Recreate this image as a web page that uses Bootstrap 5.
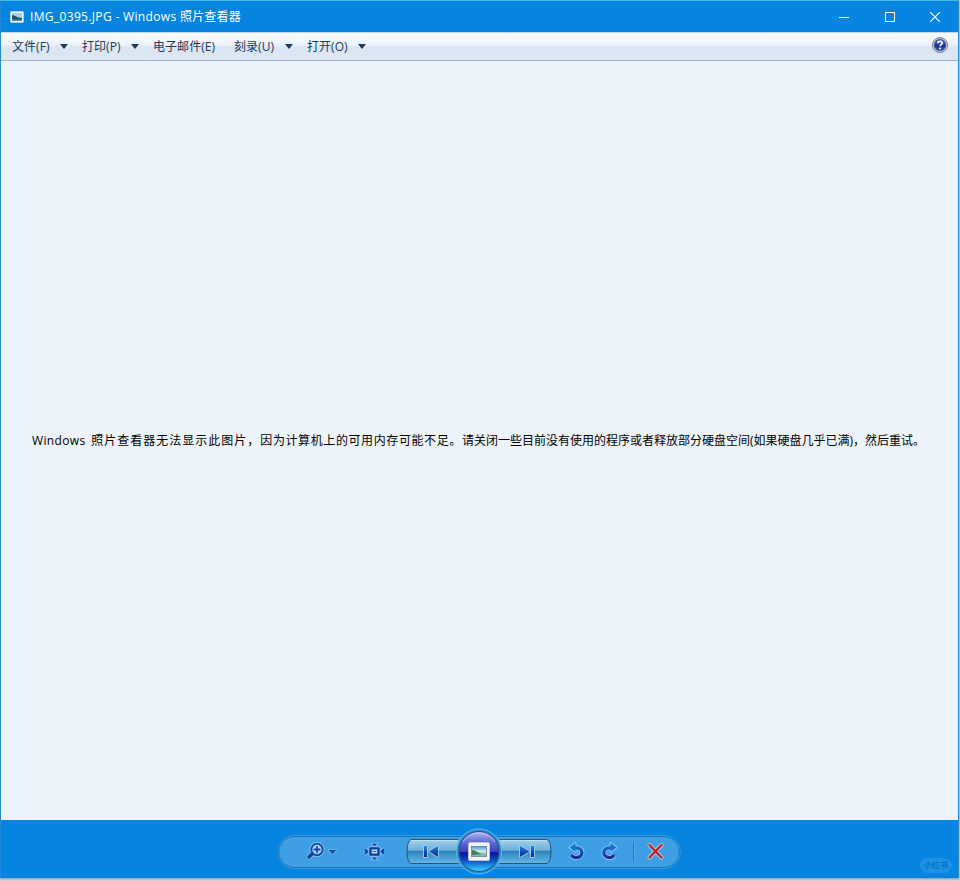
<!DOCTYPE html>
<html lang="zh-CN">
<head>
<meta charset="utf-8">
<meta name="viewport" content="width=device-width, initial-scale=1">
<title>IMG_0395.JPG - Windows 照片查看器</title>
<link href="https://cdn.jsdelivr.net/npm/bootstrap@5.3.0/dist/css/bootstrap.min.css" rel="stylesheet">
<style>
body{background:#d2d6da;font-family:"Open Sans","Noto Sans CJK SC",sans-serif;font-size:12px;line-height:18px;height:881px;overflow:hidden}
.window{width:959px;height:878px;background:#0585e0;border-top:1px solid #53b7ef;border-left:1px solid #2389d3;border-right:1px solid #2b8bd0;box-shadow:0 1px 2px #8c9299}
.titlebar{height:31px;color:#fff;padding-left:9px}
.title-text{margin-left:6px}
.title-latin{letter-spacing:.34px}
.title-cjk{letter-spacing:.2px}
.caption-btn{width:45.5px;height:30px;border:0;background:none;color:#fff}
.menubar{height:29px;background:linear-gradient(#f9fcff 0,#eaf2fa 45%,#dae6f3 52%,#dce7f4 100%);border-bottom:1px solid #9eb4ce;border-top:1px solid #bcd7ee;color:#1e395b;padding-left:11px}
.menu-item{display:flex;align-items:center;border:0;background:none;color:inherit;padding:0;white-space:nowrap;height:27px;letter-spacing:.05px}
.w-70{width:70px}.w-71{width:71px}.w-81{width:81px}.w-73{width:73px}
.arrow{width:0;height:0;border:4px solid transparent;border-top:5px solid #1e395b;border-bottom:0;margin:0 14px 1px auto}
.help{margin:0 10px 4px auto}
.viewer{height:759px;background:#edf3fa;color:#000;padding-left:31px;white-space:nowrap}
.controls{height:57px;padding-left:277px}
.controls svg,.titlebar svg,.menubar svg{display:block;flex:none}
.watermark{position:absolute;left:920px;top:858px;width:32px;height:15px;border-radius:8px;background:#1e91e3;color:#0873c5;font-size:8px;font-weight:bold;line-height:14px;text-align:center}
.s0{letter-spacing:.35px;margin-right:-1.8px}.s1{letter-spacing:1px}.s2{letter-spacing:.6px}
</style>
</head>
<body>
<main class="window d-flex flex-column">
  <header class="titlebar d-flex align-items-center">
    <svg width="14" height="12" viewBox="0 0 14 12"><rect x=".5" y=".5" width="13" height="11" rx="1" fill="#fafafa" stroke="#b4c8d6"/><path d="M2 2h10v8H2z" fill="#a4d4ea"/><path d="M2 4c3 0 5 3 10 3v2H2z" fill="#1f5664"/><path d="M2 8.5h10V10H2z" fill="#4e93b4"/></svg>
    <span class="title-text"><span class="title-latin">IMG_0395.JPG - Windows </span><span class="title-cjk">照片查看器</span></span>
    <div class="ms-auto d-flex">
      <button class="caption-btn p-0 d-flex align-items-center justify-content-center" aria-label="最小化"><svg width="10" height="10"><path d="M0 5.5h10" stroke="#fff"/></svg></button>
      <button class="caption-btn p-0 d-flex align-items-center justify-content-center" aria-label="最大化"><svg width="10" height="10"><path d="M.5.5h9v9h-9z" fill="none" stroke="#fff"/></svg></button>
      <button class="caption-btn p-0 d-flex align-items-center justify-content-center" aria-label="关闭"><svg width="10" height="10"><path d="M0 0l10 10M10 0L0 10" stroke="#fff" stroke-width="1.1"/></svg></button>
    </div>
  </header>
  <nav class="menubar d-flex align-items-center">
    <button class="menu-item w-70">文件(F)<i class="arrow"></i></button>
    <button class="menu-item w-71">打印(P)<i class="arrow"></i></button>
    <button class="menu-item w-81">电子邮件(E)</button>
    <button class="menu-item w-73">刻录(U)<i class="arrow"></i></button>
    <button class="menu-item w-73">打开(O)<i class="arrow"></i></button>
    <svg class="help" width="16" height="16" viewBox="0 0 16 16" role="img" aria-label="帮助"><defs><linearGradient id="hg" x2="0" y2="1"><stop stop-color="#5775c8"/><stop offset=".48" stop-color="#2643a0"/><stop offset=".55" stop-color="#172c88"/><stop offset="1" stop-color="#3d68cd"/></linearGradient></defs><circle cx="8" cy="8" r="7.5" fill="#d8dbe2" stroke="#77808e"/><circle cx="8" cy="8" r="5.9" fill="url(#hg)" stroke="#34488b" stroke-width=".6"/><path d="M5.9 6.3C6 3.7 10.2 3.7 10.2 6.2c0 1.5-2 1.5-2 3.1" fill="none" stroke="#fff" stroke-width="1.7"/><circle cx="8.1" cy="11.4" r="1" fill="#fff"/></svg>
  </nav>
  <section class="viewer d-flex align-items-center">
    <div><span class="s0">Windows&nbsp;</span><span class="s1"> 照片查看器无法显示此图片，</span><span class="s2">因为计算机上的可用内存可能不足。</span><span>请关闭一些目前没有使用的程序或者释放部分硬盘空间(如果硬盘几乎已满)，然后重试。</span></div>
  </section>
  <footer class="controls">
    <svg width="404" height="58" viewBox="278 820 404 58" role="img" aria-label="图片控制">
      <defs>
        <linearGradient id="btn" x2="0" y2="1"><stop stop-color="#a5d0ea"/><stop offset=".44" stop-color="#6eb0da"/><stop offset=".5" stop-color="#2c84be"/><stop offset="1" stop-color="#65bae8"/></linearGradient>
        <linearGradient id="orb" x2="0" y2="1"><stop stop-color="#b2b9f2"/><stop offset=".25" stop-color="#6570d5"/><stop offset=".5" stop-color="#3a42b8"/><stop offset=".53" stop-color="#07119b"/><stop offset=".72" stop-color="#0650c2"/><stop offset="1" stop-color="#38d8ff"/></linearGradient>
        <linearGradient id="ico" x2="0" y2="1"><stop stop-color="#1782df"/><stop offset="1" stop-color="#15268f"/></linearGradient>
        <linearGradient id="turn" gradientUnits="userSpaceOnUse" x1="0" y1="843" x2="0" y2="859"><stop stop-color="#0b7bdc"/><stop offset=".5" stop-color="#1653b5"/><stop offset="1" stop-color="#17248c"/></linearGradient>
        <linearGradient id="pic" x2="0" y2="1"><stop stop-color="#4d9ed1"/><stop offset=".5" stop-color="#d3eaf0"/><stop offset=".72" stop-color="#8bbf9c"/><stop offset="1" stop-color="#71b7ce"/></linearGradient>
      </defs>
      <rect x="277.7" y="835.7" width="402.6" height="32.6" rx="16.3" fill="none" stroke="#4aa6e8" stroke-width=".8"/>
      <rect x="278.5" y="836.5" width="401" height="31" rx="15.5" fill="#3f9fe5" stroke="#1f72b4"/>
      <g stroke-linecap="round" stroke-linejoin="round">
        <g fill="none"><path d="M312.5 853.5l-3.5 3.5" stroke="#8fcbf2" stroke-width="4.6"/><circle cx="317" cy="849.5" r="5.7" stroke="#8fcbf2" stroke-width="3.6"/><path d="M312.5 853.5l-3.5 3.5" stroke="#173795" stroke-width="3.2"/><circle cx="317" cy="849.5" r="5.7" fill="#a9d9f7" stroke="#194caa" stroke-width="2.1"/><path d="M314.3 849.5h5.4M317 846.8v5.4" stroke="#1c47a4" stroke-width="1.8"/></g>
        <path d="M328.5 850h8l-4 4.3z" fill="#174caa" stroke="#86c5f0" stroke-width="1.2" paint-order="stroke"/>
        <g stroke="#9bd0f3" stroke-width="1.6" fill="#174aa7" paint-order="stroke"><path d="M371.5 843.5h6l-3 3zM371.5 859.5h6l-3-3zM366 848.5l3 3-3 3zM383 848.5l-3 3 3 3z"/><rect x="369.5" y="847.3" width="10" height="8.4"/></g><path d="M365.5 849v5M383.5 849v5" stroke="#174aa7"/><rect x="370.6" y="848.5" width="7.8" height="6" fill="#b7dff7" stroke="#143f9e" stroke-width="2.2"/><path d="M373 851.5h3" stroke="#2f65ae"/>
      </g>
      <path d="M411 839.5h46q4 0 3 4c-3 6-3 11 0 16q1 4-3 4h-46q-4-2-4-12t4-12z" fill="url(#btn)" stroke="#265574"/>
      <path d="M501 839.5h46q4 2 4 12t-4 12h-46q-4 0-3-4c3-5 3-10 0-16q-1-4 3-4z" fill="url(#btn)" stroke="#265574"/>
      <path d="M411 840.5h46M501 840.5h46" stroke="#c2dff0"/>
      <g fill="url(#ico)" stroke="#9dceed" stroke-width="1.8" stroke-linejoin="round" paint-order="stroke"><path d="M424 846h3v11h-3zM438 846v11l-9-5.5zM531 846h3v11h-3zM520 846v11l9.5-5.5z"/></g>
      <circle cx="479" cy="851.5" r="22.5" fill="#2188cc" stroke="#71b8e7"/><circle cx="479" cy="851.5" r="20" fill="url(#orb)" stroke="#264d91"/><path d="M463 842c7-12 25-12 32 0" fill="none" stroke="#c5caf8" stroke-width=".8"/>
      <rect x="468.5" y="842.5" width="21" height="18" rx="1.5" fill="#f2f3f6" stroke="#bdc5d3"/><rect x="471.5" y="846.5" width="15" height="10" fill="url(#pic)" stroke="#697d8f" stroke-width=".8"/><path d="M472 850c4 0 5 3 10 4l-10 1z" fill="#398356"/>
      <g fill="none" stroke-linejoin="round">
        <g stroke="#93cdf4"><path d="M574 847.8h2.2c8 0 7.5 9.7 0 9.7-2.5 0-3.7-.8-5-2.5" stroke-width="4.8"/><path d="M569.5 847.5l6-4.5v9z" stroke-width="1.8"/></g>
        <path d="M574 847.8h2.2c8 0 7.5 9.7 0 9.7-2.5 0-3.7-.8-5-2.5" stroke="url(#turn)" stroke-width="3.2"/><path d="M569.5 847.5l6-4.5v9z" fill="#1272d0"/>
        <g stroke="#93cdf4"><path d="M611.5 847.8h-2.2c-7.5 0-7 9.7 0 9.7 2.5 0 3.7-.8 5-2.5" stroke-width="4.8"/><path d="M616.5 847.5l-6-4.5v9z" stroke-width="1.8"/></g>
        <path d="M611.5 847.8h-2.2c-7.5 0-7 9.7 0 9.7 2.5 0 3.7-.8 5-2.5" stroke="url(#turn)" stroke-width="3.2"/><path d="M616.5 847.5l-6-4.5v9z" fill="#1272d0"/>
      </g>
      <path d="M633.5 842v19" stroke="#2475b5"/><path d="M634.5 842v19" stroke="#57ade9"/>
      <path d="M649.5 845l12 12.5M661.5 845l-12 12.5" stroke="#b1cfea" stroke-width="4" stroke-linecap="round"/><path d="M649.5 845l12 12.5M661.5 845l-12 12.5" stroke="#be2028" stroke-width="2.4" stroke-linecap="round"/>
    </svg>
  </footer>
</main>
<div class="watermark">小红书</div>
<script src="https://cdn.jsdelivr.net/npm/bootstrap@5.3.0/dist/js/bootstrap.bundle.min.js"></script>
</body>
</html>
